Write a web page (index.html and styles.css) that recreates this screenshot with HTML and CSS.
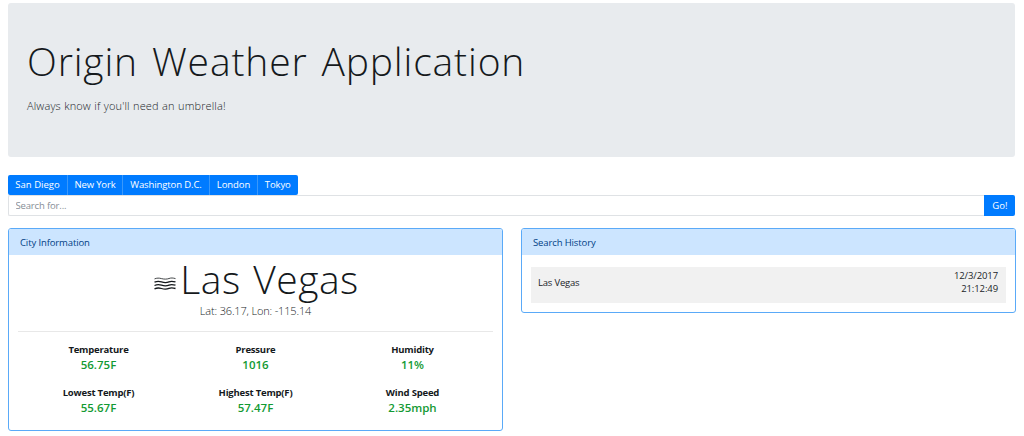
FILE: index.html
```
<!DOCTYPE html>
<html lang="en">
<head>
<meta charset="utf-8">
<title>Origin Weather Application</title>
<link rel="stylesheet" href="styles.css">
</head>
<body>
<header class="jumbotron">
  <h1 class="display">Origin Weather Application</h1>
  <p class="lead">Always know if you'll need an umbrella!</p>
</header>
<nav class="cities">
  <button class="city city-sd">San Diego</button>
  <button class="city city-ny">New York</button>
  <button class="city city-dc">Washington D.C.</button>
  <button class="city city-ld">London</button>
  <button class="city city-tk">Tokyo</button>
</nav>
<div class="search">
  <input class="search-input" type="text" placeholder="Search for...">
  <button class="go">Go!</button>
</div>
<main class="columns">
  <section class="card card-city">
    <div class="card-header">City Information</div>
    <div class="card-body">
      <div class="place">
        <svg class="mist" viewBox="0 0 22 13" fill="none" stroke="#15191c">
          <path stroke-width=".8" d="M.5 1.900C3 .9 5 .9 7.500 1.600S13 2.300 15 1.500S19 .9 21.500 1.600"/>
          <path stroke-width="1.300" d="M.5 5.200C3 4.100 5 4.100 7.500 4.900S13 5.700 15 4.800S19 4.200 21.500 4.900M.5 8.500C3 7.400 5 7.400 7.500 8.200S13 9 15 8.100S19 7.500 21.500 8.200M.5 11.800C3 10.700 5 10.700 7.500 11.500S13 12.300 15 11.400S19 10.800 21.500 11.500"/>
        </svg>
        <h2 class="city-name">Las Vegas</h2>
      </div>
      <p class="coords">Lat: 36.17, Lon: -115.14</p>
      <hr class="rule">
      <div class="stats">
        <div class="stat"><div class="label">Temperature</div><div class="value">56.75F</div></div>
        <div class="stat"><div class="label">Pressure</div><div class="value">1016</div></div>
        <div class="stat"><div class="label">Humidity</div><div class="value">11%</div></div>
        <div class="stat"><div class="label">Lowest Temp(F)</div><div class="value">55.67F</div></div>
        <div class="stat"><div class="label">Highest Temp(F)</div><div class="value">57.47F</div></div>
        <div class="stat"><div class="label">Wind Speed</div><div class="value">2.35mph</div></div>
      </div>
    </div>
  </section>
  <section class="card card-history">
    <div class="card-header">Search History</div>
    <div class="entry">
      <span class="entry-city">Las Vegas</span>
      <span class="entry-time">12/3/2017<br>21:12:49</span>
    </div>
  </section>
</main>
</body>
</html>
```
FILE: styles.css
```
* { box-sizing: border-box; }
body {
  margin: 0;
  padding: 3px 8.600px 0 8px;
  height: 436px;
  overflow: hidden;
  background: #fff;
  color: #212529;
  font: 9.5px/13px "Open Sans", "Noto Sans", sans-serif;
}
h1, h2, p { margin: 0; font-weight: 300; }
button, input { font: inherit; border: 0; margin: 0; white-space: nowrap; }
.jumbotron {
  height: 154px;
  padding: 35px 19px 0;
  border-radius: 3px;
  background: #e8ebee;
}
.display { font-size: 39px; line-height: 46px; letter-spacing: .85px; word-spacing: 3px; color: #15191c; }
.lead { margin-top: 14px; font-size: 11px; line-height: 16px; letter-spacing: .13px; word-spacing: .4px; }
.cities { display: flex; height: 20px; margin-top: 17.500px; }
.city {
  padding: 0;
  background: #007bff;
  color: #fff;
  text-align: center;
  border-left: 1px solid #3a98fa;
}
.city-sd { width: 59px; border-left: 0; border-radius: 2px 0 0 2px; }
.city-ny { width: 55px; letter-spacing: -.15px; }
.city-dc { width: 87px; letter-spacing: -.1px; }
.city-ld { width: 48px; letter-spacing: -.1px; }
.city-tk { width: 40.500px; letter-spacing: -.1px; border-radius: 0 2px 2px 0; }
.search { display: flex; height: 21px; margin-top: .5px; }
.search-input {
  flex: 1;
  padding: 0 6.500px;
  letter-spacing: -.15px;
  border: 1px solid #dfe2e5;
  border-right: 0;
  border-radius: 2px 0 0 2px;
}
.search-input::placeholder { color: #868e96; opacity: 1; }
.go { width: 31px; padding: 0; background: #007bff; color: #fff; border-radius: 0 2px 2px 0; }
.columns { display: grid; grid-template-columns: 495px 495px; gap: 18px; margin-top: 12px; align-items: start; }
.card { border: 1px solid #5aaaf8; border-radius: 3px; overflow: hidden; }
.card-city { height: 203px; }
.card-history { height: 85px; }
.card-header { height: 26px; padding: 0 11px; line-height: 27px; letter-spacing: -.12px; background: #cce5ff; color: #004085; }
.card-body { padding: 0 9px; text-align: center; }
.place { display: flex; align-items: center; justify-content: center; height: 47px; padding-left: 2px; }
.mist { width: 22px; height: 13px; margin: 9px 4px 0 0; }
.city-name { font-size: 39px; line-height: 47px; letter-spacing: .5px; word-spacing: 2px; color: #15191c; }
.coords { margin-top: 2px; font-size: 11px; line-height: 14px; letter-spacing: -.16px; }
.rule { margin: 13px 0 0; border: 0; border-top: 1px solid #e8e8e8; }
.stats { display: grid; grid-template-columns: repeat(3, 1fr); row-gap: 13px; padding: 11px 2px 0; }
.label { font-weight: 700; line-height: 14px; letter-spacing: -.2px; color: #15191c; }
.value { font-size: 11.500px; line-height: 16px; font-weight: 600; color: #129a33; }
.entry {
  display: flex;
  justify-content: space-between;
  height: 36px;
  margin: 12px 9px 0;
  padding: 2px 8px 0 7px;
  background: #f1f1f1;
}
.entry-city { margin-top: 7px; letter-spacing: -.2px; }
.entry-time { text-align: right; letter-spacing: -.1px; }
```
